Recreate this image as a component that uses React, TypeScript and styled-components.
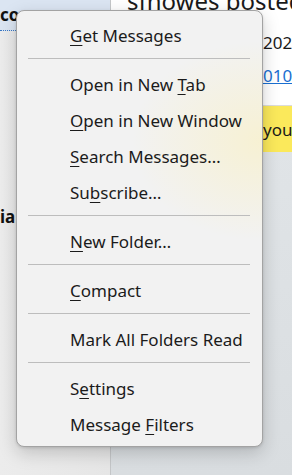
import styled, { createGlobalStyle } from 'styled-components'

const GlobalStyle = createGlobalStyle`
  html, body {
    margin: 0;
    padding: 0;
    width: 292px;
    height: 475px;
    overflow: hidden;
    font-family: 'Noto Sans', 'Open Sans', sans-serif;
  }
`

const Screen = styled.div`
  position: relative;
  width: 292px;
  height: 475px;
  display: grid;
  grid-template-columns: 111px 1fr;
  overflow: hidden;
  background: #e4e6e8;
`

const FolderPane = styled.div`
  display: flex;
  flex-direction: column;
  background: linear-gradient(90deg, #ececec 0%, #e6e6e6 100%);
  border-right: 1px solid #c4c6c8;
`

const SelectedFolder = styled.div`
  height: 31px;
  background: #dbe5f2;
  border-bottom: 1px dotted #3a78c4;
  box-sizing: border-box;
  display: flex;
  align-items: center;
  font-weight: 700;
  font-size: 17px;
  color: #111;
  white-space: nowrap;
  padding-bottom: 2px;
`

const FolderName = styled.div<{ $top: number }>`
  margin-top: ${(p) => p.$top}px;
  font-weight: 700;
  font-size: 17px;
  color: #111;
  white-space: nowrap;
  line-height: 20px;
`

const MessagePane = styled.div`
  display: flex;
  flex-direction: column;
  background: linear-gradient(180deg, #e3e7ea 0%, #d9dde0 100%);
`

const Header = styled.div`
  background: #ffffff;
  padding-left: 16px;
  display: flex;
  flex-direction: column;
  white-space: nowrap;
  border-bottom: 1px solid #dcdcdc;
  height: 106px;
  box-sizing: border-box;
`

const Subject = styled.div`
  font-size: 24px;
  line-height: 26px;
  margin-top: -12px;
  color: #1a1a1a;
`

const MetaLine = styled.div<{ $link?: boolean }>`
  font-size: 17px;
  line-height: 22px;
  margin-top: ${(p) => (p.$link ? 11 : 18)}px;
  padding-left: 136px;
  color: ${(p) => (p.$link ? '#1a6fd1' : '#1a1a1a')};
  text-decoration: ${(p) => (p.$link ? 'underline' : 'none')};
`

const Notice = styled.div`
  height: 46px;
  background: #fbe95b;
  display: flex;
  align-items: center;
  padding-left: 152px;
  font-size: 17px;
  color: #1a1a1a;
  white-space: nowrap;
`

const Menu = styled.div`
  position: absolute;
  left: 16px;
  top: 10px;
  width: 247px;
  box-sizing: border-box;
  padding: 6px 0 4px;
  border: 1px solid #a3a3a3;
  border-radius: 8px;
  background:
    radial-gradient(ellipse 130px 100px at 245px 130px, rgba(250, 240, 190, 0.6), rgba(250, 240, 190, 0) 100%),
    #f2f2f2;
  box-shadow: 0 6px 18px rgba(0, 0, 0, 0.18), 0 1px 3px rgba(0, 0, 0, 0.12);
  display: flex;
  flex-direction: column;
`

const Item = styled.div`
  height: 36px;
  display: flex;
  align-items: center;
  padding-left: 53px;
  font-size: 17px;
  color: #1b1b1b;
  white-space: nowrap;
`

const Key = styled.span`
  text-decoration: underline;
  text-underline-offset: 3px;
  text-decoration-thickness: 1px;
`

const Separator = styled.div`
  height: 13px;
  display: flex;
  align-items: center;
  padding: 0 12px 0 11px;
  margin-top: -1px;
  margin-bottom: 1px;

  &::after {
    content: '';
    flex: 1;
    height: 1px;
    background: #bdbdbd;
  }
`

type Entry = { pre?: string; key?: string; post?: string } | 'sep'

const entries: Entry[] = [
  { key: 'G', post: 'et Messages' },
  'sep',
  { pre: 'Open in New ', key: 'T', post: 'ab' },
  { key: 'O', post: 'pen in New Window' },
  { key: 'S', post: 'earch Messages…' },
  { pre: 'Su', key: 'b', post: 'scribe…' },
  'sep',
  { key: 'N', post: 'ew Folder…' },
  'sep',
  { key: 'C', post: 'ompact' },
  'sep',
  { pre: 'Mark All Folders Read' },
  'sep',
  { pre: 'S', key: 'e', post: 'ttings' },
  { pre: 'Message ', key: 'F', post: 'ilters' },
]

export default function App() {
  return (
    <>
      <GlobalStyle />
      <Screen>
        <FolderPane>
          <SelectedFolder>com</SelectedFolder>
          <FolderName $top={176}>ial</FolderName>
        </FolderPane>
        <MessagePane>
          <Header>
            <Subject>sfnowes bosted</Subject>
            <MetaLine>2025</MetaLine>
            <MetaLine $link>0101</MetaLine>
          </Header>
          <Notice>your</Notice>
        </MessagePane>
        <Menu>
          {entries.map((e, i) =>
            e === 'sep' ? (
              <Separator key={i} />
            ) : (
              <Item key={i}>
                <span>
                  {e.pre}
                  {e.key && <Key>{e.key}</Key>}
                  {e.post}
                </span>
              </Item>
            ),
          )}
        </Menu>
      </Screen>
    </>
  )
}
